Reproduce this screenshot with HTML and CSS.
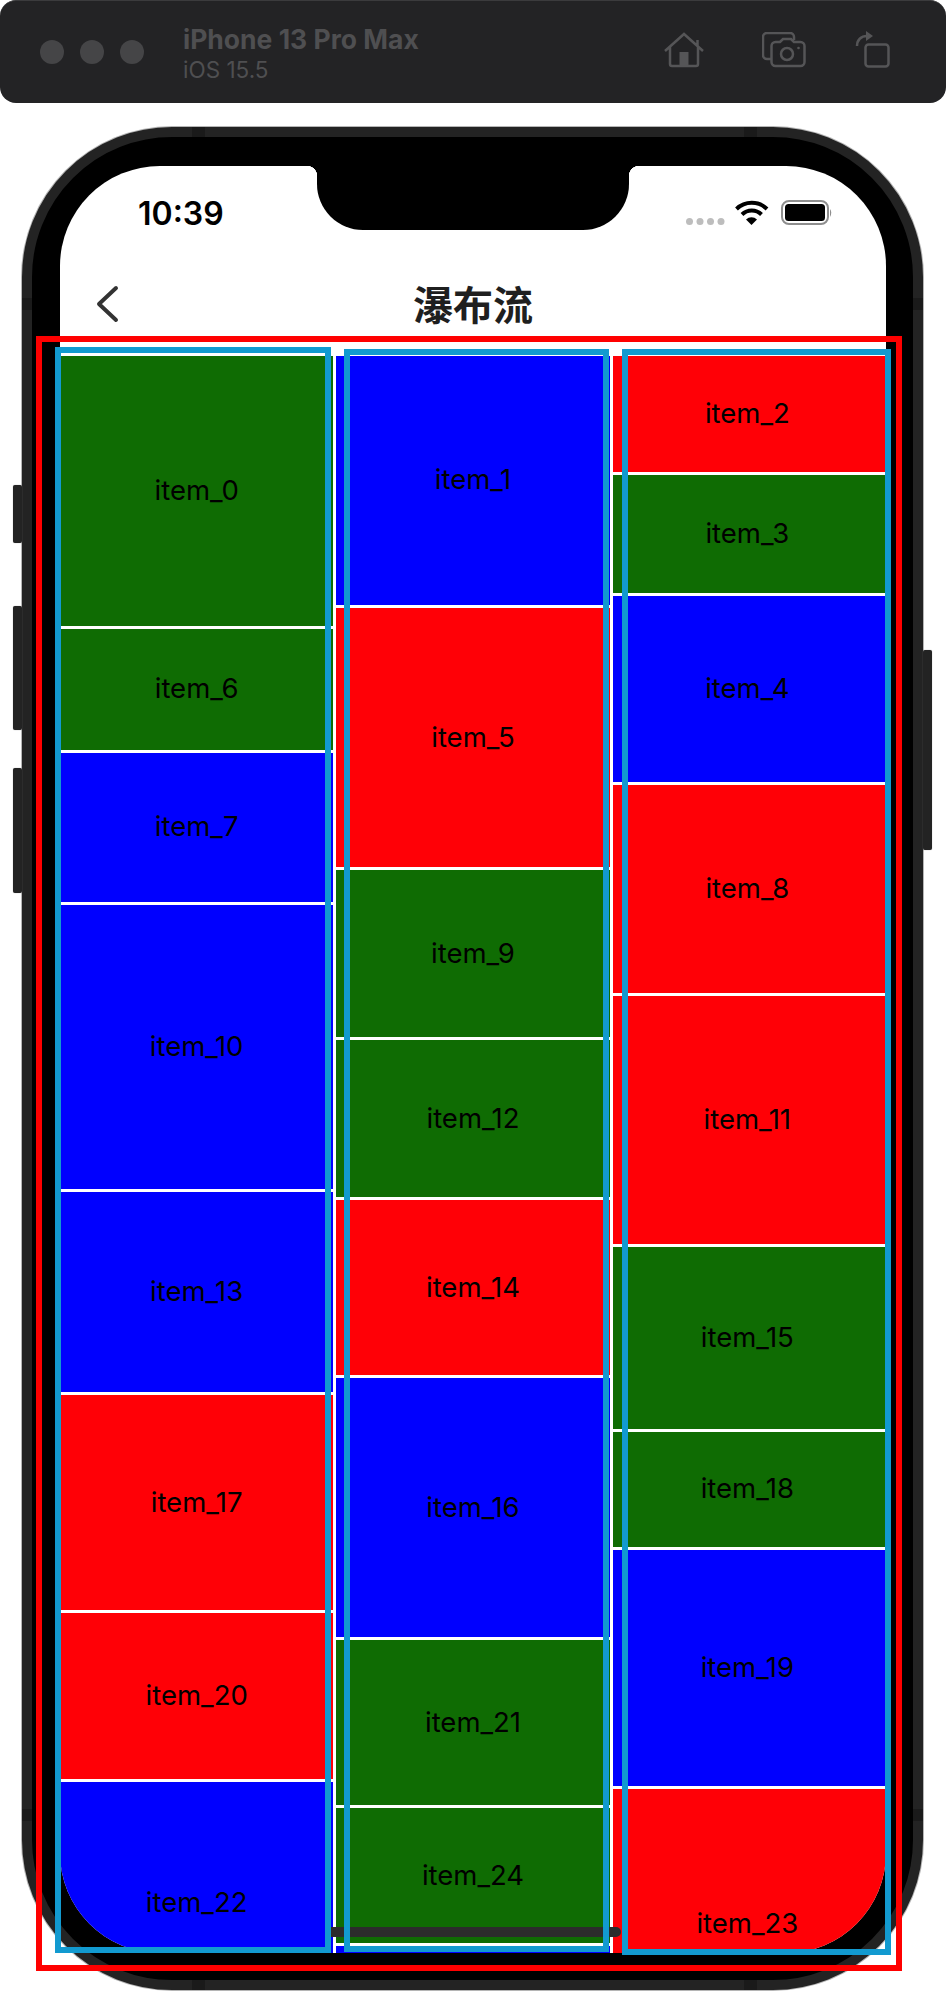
FILE: index.html
```html
<!DOCTYPE html>
<html lang="zh">
<head>
    <meta charset="UTF-8">
    <meta name="viewport" content="width=device-width, initial-scale=1.0">
    <title>瀑布流</title>
    <link rel="stylesheet" href="styles.css">
</head>
<body>
    <div class="page">
        <!-- Simulator toolbar -->
        <header class="toolbar">
            <div class="lights"><span></span><span></span><span></span></div>
            <div class="device">
                <div class="device-name">iPhone 13 Pro Max</div>
                <div class="device-os">iOS 15.5</div>
            </div>
            <div class="tools">
                <svg class="tool-home" width="40" height="36" viewBox="0 0 40 36">
                    <path d="M1 19 L20 2 L39 19 M33.500 8 V14 M6 15 V32 Q6 34 8 34 H32 Q34 34 34 32 V15"/>
                    <rect class="solid" x="15.500" y="20" width="9" height="14"/>
                </svg>
                <svg class="tool-camera" width="44" height="36" viewBox="0 0 44 36">
                    <path d="M9 27 H5 A4 4 0 0 1 1 23 V5 A4 4 0 0 1 5 1 H28 A4 4 0 0 1 32 5 V8"/>
                    <path d="M13.500 10 H18 L21 7 H29 L32 10 H38.500 A4 4 0 0 1 42.500 14 V30 A4 4 0 0 1 38.500 34 H13.500 A4 4 0 0 1 9.500 30 V14 A4 4 0 0 1 13.500 10 Z"/>
                    <circle cx="25" cy="22" r="6"/>
                    <circle class="solid" cx="36.500" cy="16" r="1.300"/>
                </svg>
                <svg class="tool-rotate" width="36" height="38" viewBox="0 0 36 38">
                    <rect x="10.500" y="13.500" width="23" height="22" rx="3"/>
                    <path d="M2 15 C2 9 6 5 12 5"/>
                    <path class="solid" d="M11 0 L18 5 L11 10 Z"/>
                </svg>
            </div>
        </header>

        <div class="phone">
            <span class="side-btn btn-mute"></span>
            <span class="side-btn btn-up"></span>
            <span class="side-btn btn-down"></span>
            <span class="side-btn btn-power"></span>
            <span class="band band-t1"></span>
            <span class="band band-t2"></span>
            <span class="band band-l1"></span>
            <span class="band band-l2"></span>
            <span class="band band-r1"></span>
            <span class="band band-r2"></span>
            <span class="band band-b1"></span>
            <span class="band band-b2"></span>

            <div class="screen">
                <div class="notch"></div>

                <div class="status-bar">
                    <span class="time">10:39</span>
                    <svg class="status-icons" width="146" height="26" viewBox="0 0 146 26">
                        <g fill="#bdbdbd">
                            <circle cx="3.500" cy="21.500" r="3.500"/>
                            <circle cx="14" cy="21.500" r="3.500"/>
                            <circle cx="24.500" cy="21.500" r="3.500"/>
                            <circle cx="35" cy="21.500" r="3.500"/>
                        </g>
                        <g fill="none" stroke="#000" stroke-width="4">
                            <path d="M50.500 9 A22 22 0 0 1 81 9"/>
                            <path d="M56 14.500 A14 14 0 0 1 75.500 14.500"/>
                        </g>
                        <path d="M60 19.500 A8 8 0 0 1 71 19.500 L65.500 25 Z"/>
                        <rect x="96" y="1" width="46" height="23" rx="7" fill="none" stroke="#8e8e8e" stroke-width="2"/>
                        <rect x="99" y="4" width="40" height="17" rx="3.500"/>
                        <path d="M144 9 Q146.500 12.500 144 17 Z" fill="#8e8e8e"/>
                    </svg>
                </div>

                <nav class="nav-bar">
                    <svg class="back" width="24" height="38" viewBox="0 0 24 38">
                        <path d="M21 3 L4 19 L21 35"/>
                    </svg>
                    <h1>瀑布流</h1>
                </nav>

                <main class="wall">
                    <div class="column">
                        <div class="cell green" style="height:270.2px">item_0</div>
                        <div class="cell green" style="height:120.6px">item_6</div>
                        <div class="cell blue" style="height:149.4px">item_7</div>
                        <div class="cell blue" style="height:284.3px">item_10</div>
                        <div class="cell blue" style="height:199.7px">item_13</div>
                        <div class="cell red" style="height:215.3px">item_17</div>
                        <div class="cell red" style="height:165.2px">item_20</div>
                        <div class="cell blue" style="height:243px">item_22</div>
                    </div>
                    <div class="column">
                        <div class="cell blue" style="height:248.8px">item_1</div>
                        <div class="cell red" style="height:259.7px">item_5</div>
                        <div class="cell green" style="height:166.7px">item_9</div>
                        <div class="cell green" style="height:157.3px">item_12</div>
                        <div class="cell red" style="height:174.3px">item_14</div>
                        <div class="cell blue" style="height:259.7px">item_16</div>
                        <div class="cell green" style="height:165px">item_21</div>
                        <div class="cell green" style="height:135px">item_24</div>
                        <div class="cell blue" style="height:180px"></div>
                    </div>
                    <div class="column">
                        <div class="cell red" style="height:115.8px">item_2</div>
                        <div class="cell green" style="height:118.7px">item_3</div>
                        <div class="cell blue" style="height:186px">item_4</div>
                        <div class="cell red" style="height:207.3px">item_8</div>
                        <div class="cell red" style="height:248px">item_11</div>
                        <div class="cell green" style="height:182px">item_15</div>
                        <div class="cell green" style="height:115px">item_18</div>
                        <div class="cell blue" style="height:236.4px">item_19</div>
                        <div class="cell red" style="height:270px">item_23</div>
                    </div>
                </main>

                <div class="home-bar"></div>
            </div>
        </div>

        <!-- Annotation boxes drawn over the screenshot -->
        <div class="mark mark-list"></div>
        <div class="mark mark-col1"></div>
        <div class="mark mark-col2"></div>
        <div class="mark mark-col3"></div>
    </div>
</body>
</html>
```

FILE: styles.css
```css
* {
    box-sizing: border-box;
}
body {
    margin: 0;
    background: #fff;
    font-family: Inter, 'Noto Sans CJK SC', sans-serif;
}
.page {
    position: relative;
    width: 946px;
    height: 1996px;
    overflow: hidden;
}

/* toolbar */
.toolbar {
    display: flex;
    align-items: center;
    height: 103px;
    padding: 0 55px 0 40px;
    background: #232325;
    border-top: 1px solid #3b3b3d;
    border-radius: 16px;
}
.lights {
    display: flex;
    gap: 16px;
}
.lights span {
    width: 24px;
    height: 24px;
    border-radius: 50%;
    background: #454547;
}
.device {
    margin-left: 39px;
    margin-top: 4px;
}
.device-name {
    color: #4f4f51;
    font-size: 26.500px;
    font-weight: 700;
    line-height: 32px;
}
.device-os {
    color: #4f4f51;
    font-size: 22.500px;
    line-height: 30px;
}
.tools {
    display: flex;
    align-items: center;
    margin-left: auto;
    margin-top: -4px;
}
.tools svg {
    fill: none;
    stroke: #555557;
    stroke-width: 2.500;
}
.tools .solid {
    fill: #555557;
    stroke: none;
}
.tool-camera {
    margin-left: 58px;
}
.tool-rotate {
    margin-left: 49px;
}

/* phone frame */
.phone {
    position: relative;
    width: 901px;
    height: 1863px;
    margin: 24px 0 0 22px;
    padding: 29px 27px 27px 28px;
    background: #000;
    border: 10px solid #232323;
    border-radius: 150px;
    box-shadow: 0 0 0 1px #b5b5b5;
}
.side-btn {
    position: absolute;
    width: 9px;
    background: #232323;
    border-radius: 2px;
    box-shadow: 0 0 1px #888;
}
.btn-mute {
    left: -19px;
    top: 348px;
    height: 58px;
}
.btn-up {
    left: -19px;
    top: 469px;
    height: 124px;
}
.btn-down {
    left: -19px;
    top: 631px;
    height: 125px;
}
.btn-power {
    right: -19px;
    top: 513px;
    height: 200px;
}
.band {
    position: absolute;
    background: #1a1a1a;
}
.band-t1,
.band-t2,
.band-b1,
.band-b2 {
    width: 13px;
    height: 10px;
}
.band-l1,
.band-l2,
.band-r1,
.band-r2 {
    width: 10px;
    height: 12px;
}
.band-t1 {
    left: 160px;
    top: -10px;
}
.band-t2 {
    right: 156px;
    top: -10px;
}
.band-b1 {
    left: 160px;
    bottom: -10px;
}
.band-b2 {
    right: 156px;
    bottom: -10px;
}
.band-l1 {
    left: -10px;
    top: 161px;
}
.band-l2 {
    left: -10px;
    bottom: 159px;
}
.band-r1 {
    right: -10px;
    top: 161px;
}
.band-r2 {
    right: -10px;
    bottom: 159px;
}
.screen {
    position: relative;
    height: 100%;
    background: #fff;
    border-radius: 100px;
    overflow: hidden;
}
.notch {
    position: absolute;
    top: 0;
    left: 257px;
    width: 312px;
    height: 64px;
    background: #000;
    border-radius: 0 0 46px 46px;
}
.notch::before,
.notch::after {
    content: '';
    position: absolute;
    top: 0;
    width: 10px;
    height: 10px;
}
.notch::before {
    left: -10px;
    background: radial-gradient(circle at 0 100%, transparent 10px, #000 10.500px);
}
.notch::after {
    right: -10px;
    background: radial-gradient(circle at 100% 100%, transparent 10px, #000 10.500px);
}

/* status + nav */
.status-bar {
    display: flex;
    justify-content: space-between;
    align-items: center;
    height: 94px;
    padding: 0 54px 0 78px;
}
.time {
    color: #000;
    font-size: 32px;
    font-weight: 600;
}
.nav-bar {
    position: relative;
    display: flex;
    justify-content: center;
    align-items: center;
    height: 86px;
}
.nav-bar h1 {
    margin: 0;
    color: #1f1f1f;
    font-size: 40px;
    font-weight: 700;
    font-family: 'Noto Sans CJK SC', sans-serif;
}
.back {
    position: absolute;
    left: 35px;
    top: 25px;
    fill: none;
    stroke: #333;
    stroke-width: 4;
    stroke-linecap: round;
    stroke-linejoin: round;
}

/* waterfall */
.wall {
    display: grid;
    grid-template-columns: repeat(3, 1fr);
    gap: 3px;
    margin-top: 10px;
}
.column {
    display: flex;
    flex-direction: column;
    gap: 3px;
}
.cell {
    display: flex;
    flex: none;
    justify-content: center;
    align-items: center;
    padding-bottom: 2px;
    color: #000;
    font-size: 27.500px;
}
.column:last-child .cell {
    padding-right: 4px;
}
.green {
    background: #0f6c03;
}
.blue {
    background: #00f;
}
.red {
    background: #ff0006;
}
.home-bar {
    position: absolute;
    left: 265px;
    bottom: 16px;
    width: 296px;
    height: 10px;
    background: #2c2c2c;
    border-radius: 5px;
}

/* annotations */
.mark {
    position: absolute;
    border: 6px solid #129ad0;
}
.mark-list {
    left: 36px;
    top: 336px;
    width: 866px;
    height: 1635px;
    border-color: #f00;
}
.mark-col1 {
    left: 55px;
    top: 347px;
    width: 276px;
    height: 1606px;
}
.mark-col2 {
    left: 344px;
    top: 349px;
    width: 265px;
    height: 1603px;
}
.mark-col3 {
    left: 622px;
    top: 349px;
    width: 269px;
    height: 1606px;
}
```
